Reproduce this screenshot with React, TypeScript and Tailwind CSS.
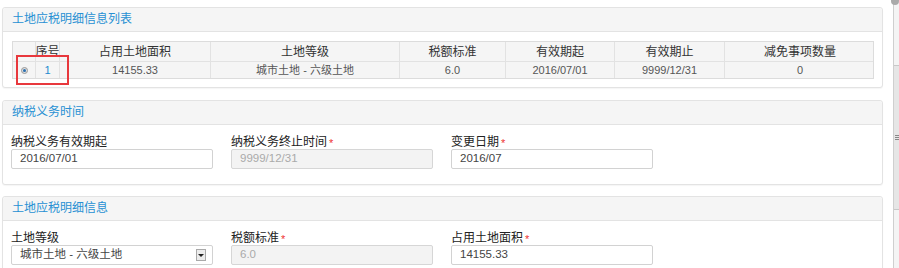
import React from 'react';

const font = { fontFamily: '"Liberation Sans", Arial, "Noto Sans CJK SC", sans-serif' };

const cols = [
    { w: 'w-[22px]', h: '', v: 'radio' },
    { w: 'w-[24px]', h: '序号', v: '1' },
    { w: 'w-[151px]', h: '占用土地面积', v: '14155.33' },
    { w: 'w-[189px]', h: '土地等级', v: '城市土地 - 六级土地' },
    { w: 'w-[106px]', h: '税额标准', v: '6.0' },
    { w: 'w-[109px]', h: '有效期起', v: '2016/07/01' },
    { w: 'w-[110px]', h: '有效期止', v: '9999/12/31' },
    { w: 'w-[151px]', h: '减免事项数量', v: '0' },
];

const Panel: React.FC<{ title: string; children: React.ReactNode; className?: string }> = ({ title, children, className = '' }) => (
    <div className={`ml-[2px] w-[881px] rounded-[3px] border border-[#e3e3e3] bg-white shadow-[0_1px_1px_rgba(0,0,0,0.04)] ${className}`}>
        <div className="h-[24px] rounded-t-[3px] border-b border-[#e3e3e3] bg-[#f5f5f5] pl-[9px] text-[12px] leading-[23px] text-[#2790d3]">
            {title}
        </div>
        {children}
    </div>
);

const Field: React.FC<{ label: string; value: string; required?: boolean; disabled?: boolean; select?: boolean }> = ({
    label, value, required, disabled, select,
}) => (
    <div className="w-[202px] mr-[18px] flex flex-col">
        <div className="h-[12px] flex items-center text-[12px] leading-[12px] text-[#222] whitespace-nowrap">
            {label}
            {required && <span className="ml-[2px] text-[11px] text-[#e33] leading-none mt-[3px]">*</span>}
        </div>
        <div
            className={`mt-[1px] h-[20px] rounded-[2px] border flex items-center pl-[8px] pr-[6px] text-[11.5px] ${
                disabled ? 'bg-[#f3f3f3] border-[#d6d6d6] text-[#aaa]' : 'bg-white border-[#d2d2d2] text-[#444]'
            }`}
        >
            <span className="flex-1 whitespace-nowrap">{value}</span>
            {select && (
                <span className="w-[10px] h-[12px] border border-[#a9a9a9] bg-[#ececec] flex items-center justify-center">
                    <span className="block w-0 h-0 border-l-[3px] border-r-[3px] border-t-[3px] border-l-transparent border-r-transparent border-t-[#222]" />
                </span>
            )}
        </div>
    </div>
);

export default function App() {
    return (
        <div className="relative w-[899px] h-[268px] overflow-hidden bg-white" style={font}>
            <div className="pt-[7px]">
                <Panel title="土地应税明细信息列表">
                    <div className="px-[9px] pt-[9px] pb-[8px]">
                        <div className="w-[862px] border border-[#dcdcdc] bg-[#f5f5f5] text-[12px]">
                            <div className="flex h-[20px] border-b border-[#e2e2e2] text-[#333]">
                                {cols.map((c, i) => (
                                    <div key={i} className={`${c.w} shrink-0 whitespace-nowrap flex items-center justify-center ${i > 0 ? 'border-l border-[#e2e2e2]' : ''}`}>
                                        {c.h}
                                    </div>
                                ))}
                            </div>
                            <div className="flex h-[16px] text-[#555] text-[11px]">
                                {cols.map((c, i) => (
                                    <div key={i} className={`${c.w} shrink-0 whitespace-nowrap flex items-center justify-center ${i > 0 ? 'border-l border-[#e2e2e2]' : ''} ${i === 1 ? 'text-[#1e8bd0]' : ''}`}>
                                        {c.v === 'radio' ? (
                                            <span className="w-[7px] h-[7px] rounded-full border border-[#999] bg-[#ddd] flex items-center justify-center">
                                                <span className="w-[3px] h-[3px] rounded-full bg-[#2a6fb0]" />
                                            </span>
                                        ) : (
                                            c.v
                                        )}
                                    </div>
                                ))}
                            </div>
                        </div>
                    </div>
                </Panel>

                <Panel title="纳税义务时间" className="mt-[12px]">
                    <div className="flex pl-[8px] pt-[11px] pb-[15px]">
                        <Field label="纳税义务有效期起" value="2016/07/01" />
                        <Field label="纳税义务终止时间" value="9999/12/31" required disabled />
                        <Field label="变更日期" value="2016/07" required />
                    </div>
                </Panel>

                <Panel title="土地应税明细信息" className="mt-[11px]">
                    <div className="flex pl-[8px] pt-[11px] pb-[15px]">
                        <Field label="土地等级" value="城市土地 - 六级土地" select />
                        <Field label="税额标准" value="6.0" required disabled />
                        <Field label="占用土地面积" value="14155.33" required />
                    </div>
                </Panel>
            </div>

            {/* highlight box */}
            <div className="absolute left-[16px] top-[55px] w-[53px] h-[30px] border-2 border-[#e8383d]" />

            {/* scrollbar */}
            <div className="absolute right-0 top-0 w-[6px] h-[268px] border-l border-[#cfcfcf] bg-[#f4f4f4]">
                <div className="absolute left-0 top-[65px] w-[5px] h-[145px] bg-[#e6e6e6] border-y border-[#c8c8c8]" />
                <div className="absolute left-[1px] top-[135px] w-[4px] flex flex-col gap-[1px]">
                    <span className="h-px bg-[#888]" />
                    <span className="h-px bg-[#888]" />
                    <span className="h-px bg-[#888]" />
                </div>
                <div className="absolute -left-[3px] -top-[3px] w-[8px] h-[8px] rounded-full bg-[#aaa]" />
            </div>
        </div>
    );
}
